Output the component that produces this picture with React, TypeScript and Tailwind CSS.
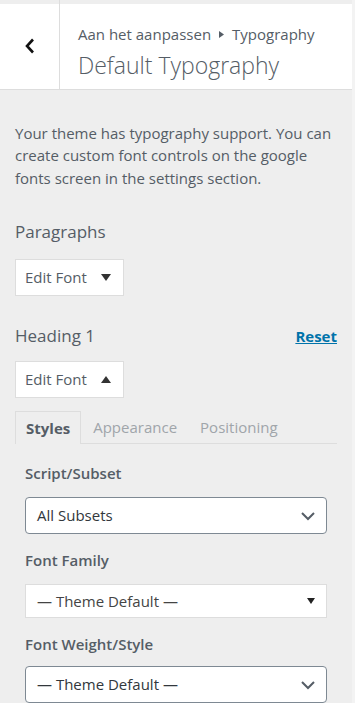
import React from "react";

const font = { fontFamily: '"Open Sans", "Noto Sans", Arial, sans-serif' };

function Chevron() {
  return (
    <svg width="16" height="10" viewBox="0 0 16 10" className="shrink-0">
      <path d="M2 2 L8 8 L14 2" fill="none" stroke="#555d66" strokeWidth="2" />
    </svg>
  );
}

function Tri({ up }: { up?: boolean }) {
  return (
    <svg width="10" height="7" viewBox="0 0 10 7">
      {up ? <polygon points="0,7 10,7 5,0" fill="#333" /> : <polygon points="0,0 10,0 5,7" fill="#333" />}
    </svg>
  );
}

function EditFont({ up }: { up?: boolean }) {
  return (
    <div className="flex h-[37px] w-[109px] items-center justify-between border border-[#dddddd] bg-white pl-[9px] pr-[12px] text-[15px] text-[#555d66]">
      <span>Edit Font</span>
      <Tri up={up} />
    </div>
  );
}

export default function App() {
  return (
    <div className="flex h-[703px] w-[355px] overflow-hidden bg-[#eeeeee]" style={font}>
      <div className="flex w-[352px] flex-col">
        {/* header */}
        <div className="flex h-[96px] border-b border-[#dddddd]">
          <div className="mt-[4px] flex w-[59px] items-center justify-center bg-white">
            <svg width="12" height="16" viewBox="0 0 12 16">
              <path d="M9 1.5 L3 8 L9 14.5" fill="none" stroke="#111" strokeWidth="2.6" />
            </svg>
          </div>
          <div className="w-px bg-[#dddddd]" />
          <div className="mt-[4px] flex flex-1 flex-col bg-white pl-[18px] pt-[19px]">
            <div className="flex items-center text-[15px] leading-[22px] text-[#555d66]">
              <span>Aan het aanpassen</span>
              <svg width="5" height="7" viewBox="0 0 5 7" className="mx-[8px]">
                <polygon points="0,0 5,3.5 0,7" fill="#555d66" />
              </svg>
              <span>Typography</span>
            </div>
            <div className="mt-[5px] text-[23px] font-light leading-[31px] text-[#555d66]">Default Typography</div>
          </div>
        </div>

        <div className="flex flex-col px-[15px]">
          <p className="mt-[32px] text-[15px] leading-[22.5px] text-[#555d66]">
            Your theme has typography support. You can create custom font controls on the google fonts screen in the settings section.
          </p>

          <div className="mt-[31px] text-[17px] leading-[24px] text-[#555d66]">Paragraphs</div>
          <div className="mt-[15px]">
            <EditFont />
          </div>

          <div className="mt-[28px] flex items-center justify-between">
            <span className="text-[17px] leading-[24px] text-[#555d66]">Heading 1</span>
            <a className="text-[15px] font-bold leading-[24px] text-[#0073aa] underline">Reset</a>
          </div>
          <div className="mt-[13px]">
            <EditFont up />
          </div>

          {/* tabs */}
          <div className="mt-[13px] flex h-[33px] items-stretch border-b border-[#dddddd] text-[15px]">
            <div className="-mb-px flex items-center border border-b-0 border-[#dddddd] bg-[#eeeeee] px-[10px] font-bold text-[#555d66]">
              Styles
            </div>
            <div className="flex items-center px-[12px] text-[#a0a5aa]">Appearance</div>
            <div className="flex items-center px-[11px] text-[#a0a5aa]">Positioning</div>
          </div>

          <div className="flex flex-col px-[10px]">
            <div className="mt-[18px] text-[15px] font-semibold leading-[22px] text-[#555d66]">Script/Subset</div>
            <div className="mt-[13px] flex h-[37px] items-center justify-between rounded-[4px] border border-[#7e8993] bg-white pl-[11px] pr-[10px] text-[15px] text-[#32373c]">
              <span>All Subsets</span>
              <Chevron />
            </div>

            <div className="mt-[15px] text-[15px] font-semibold leading-[22px] text-[#555d66]">Font Family</div>
            <div className="mt-[13px] flex h-[34px] items-center justify-between border border-[#dddddd] bg-white pl-[11px] pr-[11px] text-[15px] text-[#444]">
              <span>— Theme Default —</span>
              <svg width="8" height="6" viewBox="0 0 8 6">
                <polygon points="0,0 8,0 4,6" fill="#222" />
              </svg>
            </div>

            <div className="mt-[15px] text-[15px] font-semibold leading-[22px] text-[#555d66]">Font Weight/Style</div>
            <div className="mt-[11px] flex h-[37px] shrink-0 items-center justify-between rounded-[4px] border border-[#7e8993] bg-white pl-[11px] pr-[10px] text-[15px] text-[#32373c]">
              <span>— Theme Default —</span>
              <Chevron />
            </div>
          </div>
        </div>
      </div>
      <div className="w-[3px] bg-[#f3f3f3]" />
    </div>
  );
}
